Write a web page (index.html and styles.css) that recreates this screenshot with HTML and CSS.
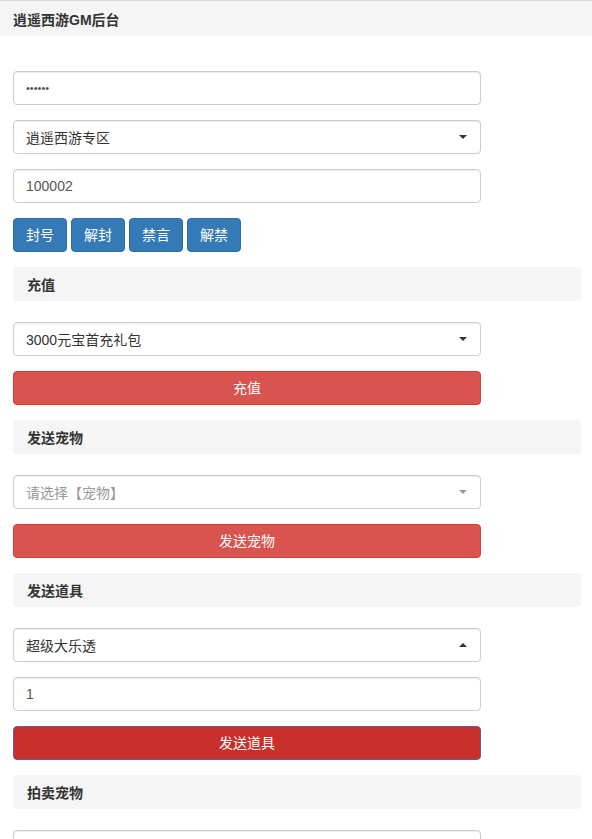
FILE: index.html
```html
<!DOCTYPE html>
<html lang="zh">
<head>
<meta charset="utf-8">
<title>逍遥西游GM后台</title>
<link rel="stylesheet" href="styles.css">
</head>
<body>
<div class="topbar">逍遥西游GM后台</div>
<main class="page">
  <div class="control pwd">••••••</div>
  <div class="control select"><span>逍遥西游专区</span><i class="caret"></i></div>
  <div class="control">100002</div>
  <div class="btn-row">
    <button class="btn blue">封号</button>
    <button class="btn blue">解封</button>
    <button class="btn blue">禁言</button>
    <button class="btn blue">解禁</button>
  </div>

  <div class="section">充值</div>
  <div class="group">
    <div class="control select"><span>3000元宝首充礼包</span><i class="caret"></i></div>
    <button class="btn red wide">充值</button>
  </div>

  <div class="section">发送宠物</div>
  <div class="group">
    <div class="control select placeholder"><span>请选择【宠物】</span><i class="caret light"></i></div>
    <button class="btn red wide">发送宠物</button>
  </div>

  <div class="section">发送道具</div>
  <div class="group">
    <div class="control select"><span>超级大乐透</span><i class="caret up"></i></div>
    <div class="control">1</div>
    <button class="btn red wide focus">发送道具</button>
  </div>

  <div class="section">拍卖宠物</div>
  <div class="group">
    <div class="control select"><span></span><i class="caret"></i></div>
  </div>
</main>
</body>
</html>
```

FILE: styles.css
```css
* { box-sizing: border-box; }
html, body { margin: 0; padding: 0; background: #fff; }
body {
  font-family: "Liberation Sans", "Noto Sans CJK SC", sans-serif;
  font-size: 14px;
  color: #333;
  overflow: hidden;
}
.topbar {
  border-top: 1px solid #d6d6d6;
  background: #f5f5f5;
  height: 36px;
  padding-left: 13px;
  display: flex;
  align-items: center;
  font-weight: bold;
  font-size: 14px;
  color: #333;
}
.page {
  padding: 35px 11px 0 13px;
  display: flex;
  flex-direction: column;
  gap: 15px;
}
.group {
  display: flex;
  flex-direction: column;
  gap: 15px;
  margin-top: 6px;
}
.control {
  width: 468px;
  height: 34px;
  border: 1px solid #ccc;
  border-radius: 4px;
  box-shadow: inset 0 1px 1px rgba(0,0,0,.075);
  padding: 0 12px;
  display: flex;
  align-items: center;
  color: #555;
  background: #fff;
}
.control.pwd { font-size: 11px; letter-spacing: 0; color: #555; }
.select { justify-content: space-between; color: #333; padding-right: 12px; }
.select.placeholder { color: #999; }
.caret {
  width: 0; height: 0;
  border-left: 4px solid transparent;
  border-right: 4px solid transparent;
  border-top: 4px solid #333;
  margin-right: 1px;
}
.caret.light { border-top-color: #999; }
.caret.up { border-top: 0; border-bottom: 4px solid #333; }
.btn-row { display: flex; gap: 4px; }
.btn {
  font-family: inherit;
  font-size: 14px;
  height: 34px;
  padding: 0 12px;
  border: 1px solid transparent;
  border-radius: 4px;
  color: #fff;
  cursor: pointer;
  line-height: 1;
}
.btn.blue { background: #337ab7; border-color: #2e6da4; width: 54px; }
.btn.red { background: #d9534f; border-color: #d43f3a; }
.btn.wide { width: 468px; }
.btn.focus { background: #c9302c; border-color: #6b5b9a; }
.section {
  width: 568px;
  height: 34px;
  background: #f5f5f5;
  border-radius: 3px;
  padding-left: 14px;
  display: flex;
  align-items: center;
  font-weight: bold;
  color: #333;
}
```
